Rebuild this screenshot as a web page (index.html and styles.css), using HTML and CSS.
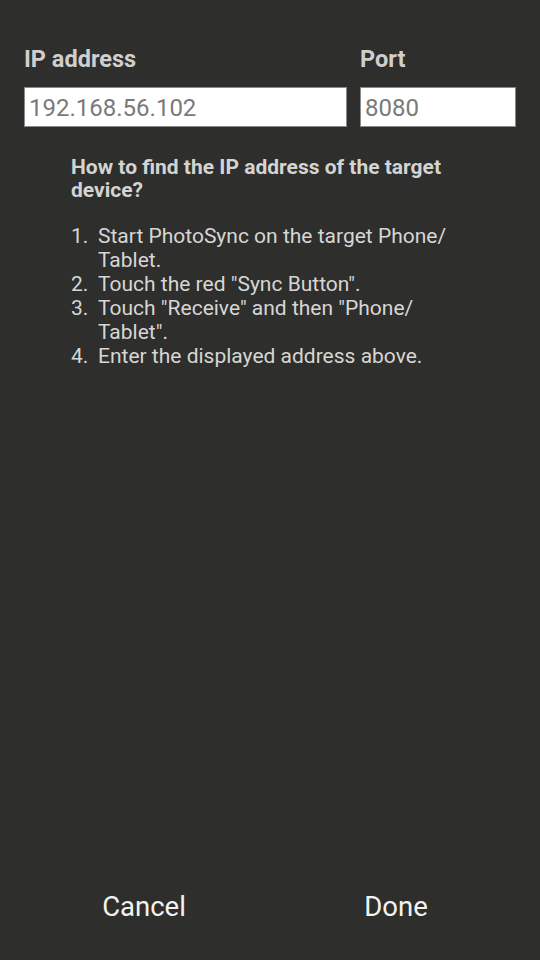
FILE: index.html
```html
<!DOCTYPE html>
<html lang="en">
<head>
    <meta charset="UTF-8">
    <meta name="viewport" content="width=device-width, initial-scale=1.0">
    <title>PhotoSync - Target device</title>
    <link rel="stylesheet" href="styles.css">
</head>
<body>

    <div class="screen">
        <div class="fields">
            <div class="field field-ip">
                <label for="ip-input">IP address</label>
                <input type="text" id="ip-input" placeholder="192.168.56.102">
            </div>
            <div class="field field-port">
                <label for="port-input">Port</label>
                <input type="text" id="port-input" placeholder="8080">
            </div>
        </div>

        <div class="help">
            <h3>How to find the IP address of the target device?</h3>
            <ol>
                <li><span class="num">1.</span><span>Start PhotoSync on the target Phone/ Tablet.</span></li>
                <li><span class="num">2.</span><span>Touch the red "Sync Button".</span></li>
                <li><span class="num">3.</span><span>Touch "Receive" and then "Phone/ Tablet".</span></li>
                <li><span class="num">4.</span><span>Enter the displayed address above.</span></li>
            </ol>
        </div>

        <div class="actions">
            <button>Cancel</button>
            <button>Done</button>
        </div>
    </div>

</body>
</html>
```

FILE: styles.css
```css
body {
    font-family: Roboto, 'Liberation Sans', sans-serif;
    background-color: #2e2e2c;
    color: #d6d6d4;
    margin: 0;
    height: 960px;
    overflow: hidden;
}

.screen {
    display: flex;
    flex-direction: column;
    height: 100%;
}

.fields {
    display: flex;
    gap: 13px;
    padding: 43px 24px 0 24px;
}

.field {
    display: flex;
    flex-direction: column;
}

.field-ip {
    width: 323px;
}

.field-port {
    flex: 1;
}

label {
    font-size: 23.5px;
    font-weight: bold;
    color: #cfcfcd;
    line-height: 32px;
    margin-bottom: 12px;
}

input[type="text"] {
    box-sizing: border-box;
    width: 100%;
    height: 40px;
    margin: 0;
    padding: 2px 4px 0 4px;
    border: 1px solid #8a8a88;
    background-color: #ffffff;
    font-family: Roboto, 'Liberation Sans', sans-serif;
    font-size: 24px;
    outline: none;
}

input::placeholder {
    color: #7a7a7a;
}

.help {
    padding: 29px 60px 0 71px;
}

.help h3 {
    font-size: 21px;
    font-weight: bold;
    line-height: 23px;
    margin: 0 0 22px 0;
    color: #d4d4d2;
}

.help ol {
    list-style: none;
    margin: 0;
    padding: 0;
    font-size: 21px;
    line-height: 24px;
    color: #d6d6d4;
}

.help li {
    display: flex;
}

.help .num {
    flex: none;
    width: 27px;
}

/* 下部のボタン */
.actions {
    margin-top: auto;
    display: flex;
    padding: 0 18px 18px 18px;
}

.actions button {
    flex: 1;
    height: 72px;
    background: none;
    border: none;
    color: #f2f2f0;
    font-family: Roboto, 'Liberation Sans', sans-serif;
    font-size: 27.5px;
    cursor: pointer;
}
```
